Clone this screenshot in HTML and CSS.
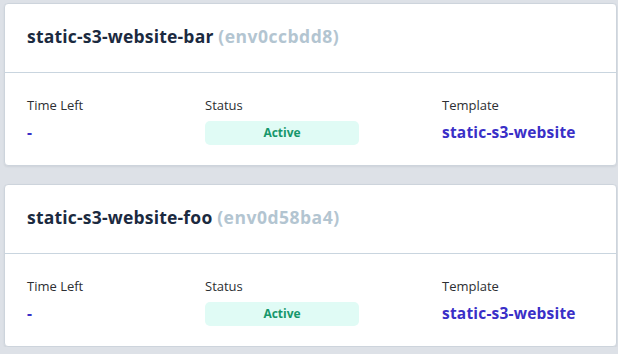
FILE: index.html
```html
<!DOCTYPE html>
<html>
<head>
	<meta charset="utf-8">
	<meta name="viewport" content="width=device-width,initial-scale=1">
	<title>Environments</title>
	<link rel="stylesheet" href="styles.css">
</head>
<body>
	<div class="list">
		<section class="card">
			<header class="card-head">
				<h2>static-s3-website-bar <span class="id">(env0ccbdd8)</span></h2>
			</header>
			<div class="card-body">
				<div class="field">
					<div class="label">Time Left</div>
					<div class="value link">-</div>
				</div>
				<div class="field">
					<div class="label">Status</div>
					<div class="pill">Active</div>
				</div>
				<div class="field">
					<div class="label">Template</div>
					<a class="value link" href="#">static-s3-website</a>
				</div>
			</div>
		</section>
		<section class="card">
			<header class="card-head">
				<h2>static-s3-website-foo <span class="id">(env0d58ba4)</span></h2>
			</header>
			<div class="card-body">
				<div class="field">
					<div class="label">Time Left</div>
					<div class="value link">-</div>
				</div>
				<div class="field">
					<div class="label">Status</div>
					<div class="pill">Active</div>
				</div>
				<div class="field">
					<div class="label">Template</div>
					<a class="value link" href="#">static-s3-website</a>
				</div>
			</div>
		</section>
	</div>
</body>
</html>
```

FILE: styles.css
```css
* {
	margin: 0;
	padding: 0;
	box-sizing: border-box;
}
body {
	font-family: "Open Sans", sans-serif;
	background: #dde1e7;
	color: #2a2f36;
	overflow: hidden;
}
.list {
	display: flex;
	flex-direction: column;
	gap: 18px;
	padding: 3px 1px 0 4px;
}
.card {
	background: #fff;
	border: 1px solid #cdd4dc;
	border-radius: 4px;
	height: 163px;
	box-shadow: 0 1px 2px rgba(40, 50, 70, .08);
}
.card-head {
	height: 69px;
	padding: 19px 22px 0;
	border-bottom: 1px solid #c9d5df;
}
.card-head h2 {
	font-size: 17.5px;
	line-height: 26px;
	letter-spacing: .2px;
	font-weight: 700;
	color: #1b2a40;
}
.card-head .id {
	color: #b3c5d1;
	letter-spacing: .5px;
}
.card-body {
	display: grid;
	grid-template-columns: 178px 237px 1fr;
	padding: 23px 22px 0;
}
.label {
	font-size: 13px;
	color: #2d2f33;
	line-height: 18px;
}
.value {
	display: block;
	margin-top: 8px;
	line-height: 20px;
	font-size: 15.5px;
	letter-spacing: .2px;
	font-weight: 700;
}
.link {
	color: #3a2fc7;
	text-decoration: none;
}
.pill {
	margin-top: 7px;
	width: 154px;
	height: 24px;
	line-height: 24px;
	border-radius: 5px;
	background: #e0fbf5;
	color: #16976b;
	font-size: 12px;
	font-weight: 700;
	text-align: center;
}
```
